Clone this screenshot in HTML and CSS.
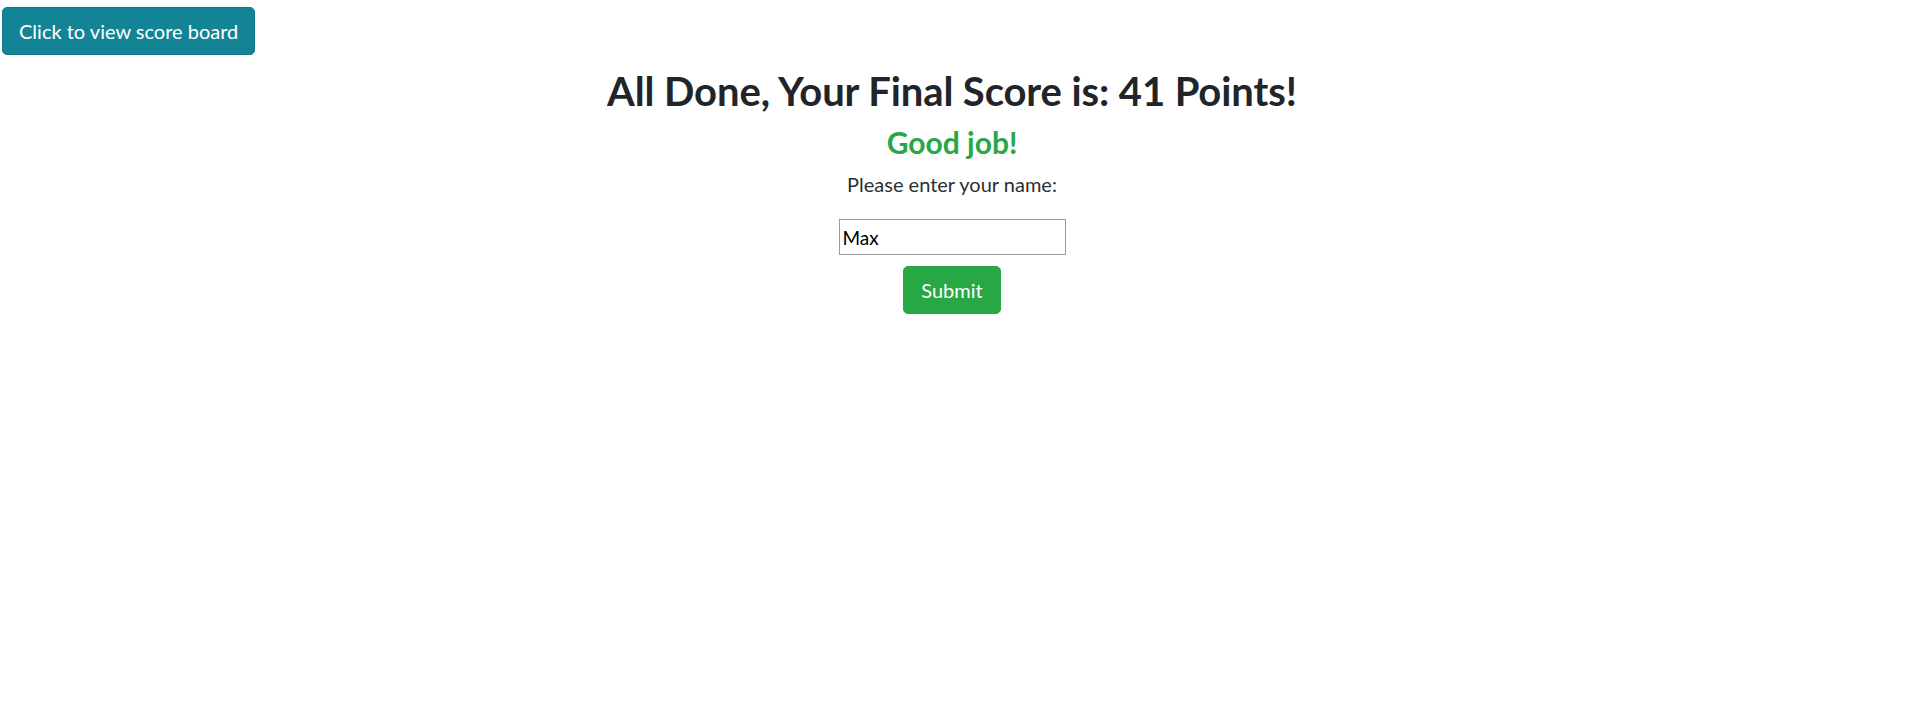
FILE: index.html
```html
<!DOCTYPE html>
<html>
<head>
<meta charset="utf-8">
<title>Quiz</title>
<link rel="stylesheet" href="styles.css">
</head>
<body>
<header class="topbar">
  <button class="btn btn-info" type="button">Click to view score board</button>
</header>
<main class="result">
  <h1 class="result-title">All Done, Your Final Score is: 41 Points!</h1>
  <h3 class="result-msg">Good job!</h3>
  <p class="lead">Please enter your name:</p>
  <form class="name-form">
    <input class="name-input" type="text" value="Max">
    <button class="btn btn-success" type="button">Submit</button>
  </form>
</main>
</body>
</html>
```
FILE: styles.css
```css
* { box-sizing: border-box; }
html, body { margin: 0; padding: 0; background: #fff; }
body {
  font-family: "Lato", "Open Sans", sans-serif;
  color: #212529;
  font-size: 16px;
  line-height: 1.5;
}
.topbar {
  display: flex;
  padding: 7px 0 0 2px;
}
.btn {
  display: inline-block;
  font-family: "Lato", "Open Sans", sans-serif;
  font-size: 20px;
  line-height: 30px;
  padding: 8px 16px;
  border: 1px solid transparent;
  border-radius: 5px;
  color: #fff;
  cursor: pointer;
}
.btn-info {
  background: #138496;
  border-color: #117a8b;
}
.btn-success {
  background: #28a745;
  border-color: #28a745;
  padding: 8px 17px;
}
.result {
  display: flex;
  flex-direction: column;
  align-items: center;
  padding: 12px 8px 0 0;
}
.result-title {
  margin: 0 0 9px;
  font-size: 40px;
  font-weight: 700;
  line-height: 1.2;
  letter-spacing: -0.1px;
}
.result-msg {
  margin: 0 0 9px;
  font-size: 30px;
  font-weight: 700;
  line-height: 1.2;
  color: #28a745;
}
.lead {
  margin: 0;
  font-size: 20px;
  font-weight: 400;
  line-height: 30px;
  color: #2b2f33;
}
.name-form {
  display: flex;
  flex-direction: column;
  align-items: center;
  gap: 11px;
  margin-top: 20px;
}
.name-input {
  width: 227px;
  height: 36px;
  border: 1px solid #9b9b9b;
  padding: 0 3px;
  font-family: "Lato", "Open Sans", sans-serif;
  font-size: 19px;
  color: #000;
  background: #fff;
  outline: none;
}
```
